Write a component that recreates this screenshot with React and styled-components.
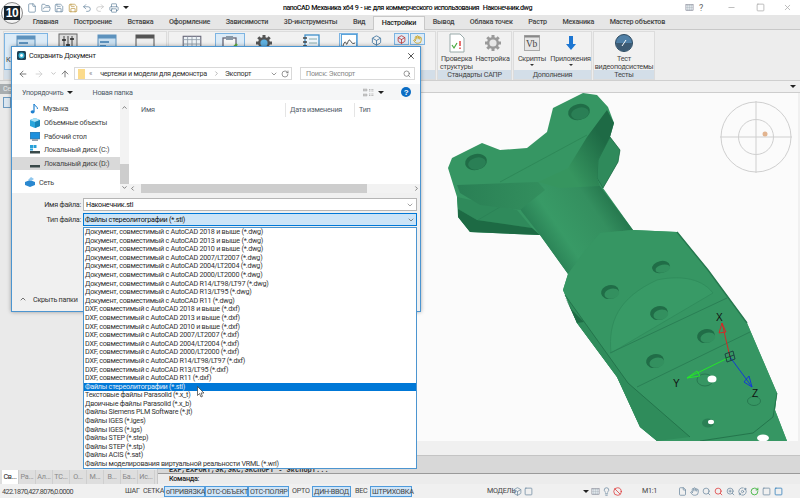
import styled, { createGlobalStyle } from 'styled-components';
import { File, FolderOpen, Save, Undo2, Redo2, Printer, ArrowLeft, ArrowRight, ArrowUp, ChevronDown, ChevronUp, ChevronLeft, ChevronRight, RotateCw, Search, X, Minus, Square, Box, Globe, Hand, ZoomIn, Lightbulb, Ban, Orbit } from 'lucide-react';

const Global = createGlobalStyle`
  html, body { margin: 0; padding: 0; background: #f0f0f0; }
  body { font-family: Roboto, "Noto Sans", sans-serif; font-size: 7.2px; letter-spacing: -0.25px; color: #333; }
  * { box-sizing: border-box; }
`;

const Page = styled.div`
  position: relative;
  width: 800px;
  height: 498px;
  overflow: hidden;
  display: flex;
  flex-direction: column;
  background: #f0f0f0;
`;

const Logo = styled.div`
  position: absolute;
  left: 1px;
  top: 2px;
  width: 22px;
  height: 22px;
  border-radius: 50%;
  background: #f4f4f4;
  border: 1px solid #8a8a8a;
  display: flex;
  align-items: center;
  justify-content: center;
  z-index: 3;
  span {
    background: #16222b;
    color: #fff;
    font: 700 12px "Liberation Sans", sans-serif;
    width: 16px;
    height: 14px;
    line-height: 14px;
    text-align: center;
    letter-spacing: -0.5px;
  }
`;

const TitleBar = styled.div`
  height: 15px;
  display: flex;
  align-items: center;
  background: #fff;
  position: relative;
  padding-left: 27px;
  color: #555;
`;

const QuickIcons = styled.div`
  display: flex;
  align-items: center;
  gap: 3.7px;
  svg { width: 10px; height: 10px; stroke-width: 1.6; color: #5b7b97; }
`;

const TitleText = styled.div`
  position: absolute;
  left: 283px;
  top: 3px;
  font-weight: 500;
  letter-spacing: -0.52px;
  word-spacing: 0.6px;
  color: #111;
  white-space: pre;
`;

const WinButtons = styled.div`
  margin-left: auto;
  display: flex;
  align-items: center;
  svg { width: 9px; height: 9px; }
`;

const WinSlot = styled.div`
  width: ${(p) => p.$w}px;
  margin-right: ${(p) => p.$mr || 0}px;
  display: flex;
  justify-content: center;
  color: ${(p) => p.$c || '#aaa'};
  font-size: 9px;
`;

const TabBar = styled.div`
  height: 15px;
  display: flex;
  align-items: flex-end;
  background: #e6e6e6;
  padding-left: 25px;
  border-bottom: 1px solid #c8c8c8;
`;

const Tab = styled.div`
  height: 13px;
  line-height: 12px;
  padding: 0 7.8px;
  font-weight: 500;
  color: ${(p) => (p.$active ? '#222' : '#444')};
  background: ${(p) => (p.$active ? '#f5f5f5' : 'transparent')};
  ${(p) => p.$active && 'border: 1px solid #c8c8c8; border-bottom: 0; margin-bottom: -1px; height: 14px;'}
`;

const Ribbon = styled.div`
  height: 51px;
  display: flex;
  gap: 1px;
  padding: 1px 0 0 3px;
  background: #ededed;
  border-bottom: 1px solid #cfcfcf;
`;

const Panel = styled.div`
  width: ${(p) => p.$w}px;
  display: flex;
  flex-direction: column;
  background: #f1f1f1;
  border: 1px solid #dcdcdc;
`;

const PanelBody = styled.div`
  flex: 1;
  display: flex;
  min-height: 0;
  justify-content: ${(p) => p.$justify || 'flex-start'};
  padding-top: 1px;
`;

const PanelLabel = styled.div`
  height: 9px;
  line-height: 9px;
  text-align: center;
  background: #d3dee8;
  color: #444;
`;

const RibbonBtn = styled.div`
  width: ${(p) => p.$w}px;
  display: flex;
  flex-direction: column;
  align-items: center;
  line-height: 7.5px;
  color: #444;
  text-align: center;
  white-space: nowrap;
  ${(p) => p.$on && 'background: #dcebf7; border: 1px solid #7db4e2;'}
  svg { flex: none; margin-bottom: 2px; }
`;

const StubLabel = styled.span`
  align-self: flex-start;
  padding-left: 1px;
`;

const SmallBtn = styled.div`
  width: 15px;
  height: 12px;
  margin-right: 1px;
  display: flex;
  align-items: center;
  justify-content: center;
  background: #dcebf7;
  border: 1px solid #7db4e2;
`;

const SmallSpot = styled.div`
  width: 36px;
  display: flex;
  justify-content: center;
  padding-top: 2px;
`;

const Caret = styled.div`
  width: 0;
  height: 0;
  margin-top: 1px;
  border: 2px solid transparent;
  border-top: 2px solid #333;
  border-bottom: 0;
`;

const Workspace = styled.div`
  flex: 1;
  min-height: 0;
  display: flex;
`;

const SidePanel = styled.div`
  width: 158px;
  display: flex;
  flex-direction: column;
  background: #e6e6e6;
  border-right: 1px solid #c8c8c8;
`;

const SideHead = styled.div`
  height: 10px;
  margin-top: 3px;
  padding-left: 3px;
  line-height: 10px;
  background: #a8adb0;
  color: #eee;
`;

const SideBody = styled.div`
  flex: 1;
  padding: 3px 3px;
  background: #eaeaea;
`;

const SideSquare = styled.div`
  width: 8px;
  height: 11px;
  background: #dbe6f0;
  border: 1px solid #6d9ac0;
`;

const SideTabs = styled.div`
  height: 14px;
  display: flex;
  padding-left: 2px;
  background: #dedede;
`;

const SideTab = styled.div`
  flex: 0 0 17px;
  text-align: center;
  line-height: 13px;
  color: ${(p) => (p.$active ? '#222' : '#888')};
  background: ${(p) => (p.$active ? '#fff' : 'transparent')};
  border-right: 1px solid #cfcfcf;
`;

const RightColumn = styled.div`
  flex: 1;
  min-width: 0;
  display: flex;
  flex-direction: column;
`;

const SubBar = styled.div`
  height: 12px;
  display: flex;
  align-items: center;
  justify-content: flex-end;
  padding-right: 4px;
  background: #f0f0f0;
  border-bottom: 1px solid #cdcdcd;
`;

const TinyCaret = styled.div`
  width: 0;
  height: 0;
  margin-left: ${(p) => p.$ml || 0}px;
  margin-right: ${(p) => p.$mr || 0}px;
  border: 3px solid transparent;
  border-top: 3px solid #222;
  border-bottom: 0;
`;

const Viewport = styled.div`
  height: 348px;
  margin-right: 2px;
  background: #fbfbfb;
  svg { display: block; }
`;

const Strip = styled.div`
  height: 15px;
  background: #f0f0f0;
  border-bottom: 1px solid #c4c4c4;
`;

const History = styled.div`
  height: 18px;
  padding: 10px 0 0 11px;
  overflow: hidden;
  background: #d8d8d8;
  border-bottom: 1px solid #9a9a9a;
  font: 700 7px/8px "Liberation Mono", monospace;
  letter-spacing: 0;
  color: #333;
  white-space: nowrap;
`;

const CommandLine = styled.div`
  flex: 1;
  padding-left: 11px;
  line-height: 10px;
  font-weight: 500;
  background: #ececec;
  color: #222;
`;

const StatusBar = styled.div`
  height: 14px;
  display: flex;
  align-items: center;
  padding: 0 2px;
  background: #f0f0f0;
  white-space: nowrap;
  color: #444;
`;

const Coords = styled.span`
  width: 74px;
  flex: none;
  letter-spacing: -0.6px;
`;

const StatusBtn = styled.div`
  flex: none;
  height: 11px;
  line-height: 9px;
  padding: 0 1px;
  margin-left: ${(p) => p.$ml || 0}px;
  ${(p) => p.$on && 'background: #cfe5f8; border: 1px solid #4f9bdc;'}
  width: ${(p) => (p.$w ? p.$w + 'px' : 'auto')};
  text-align: center;
`;

const StatusIcons = styled.div`
  display: flex;
  align-items: center;
  flex: none;
  margin-left: ${(p) => p.$ml}px;
  gap: ${(p) => p.$gap || 2}px;
  svg { width: 9px; height: 9px; color: #6e8aa0; }
`;

const Dialog = styled.div`
  position: absolute;
  left: 11px;
  top: 46px;
  width: 410px;
  height: 266px;
  z-index: 5;
  display: flex;
  flex-direction: column;
  background: #fff;
  border: 1px solid #4c95d0;
  box-shadow: 0 0 4px rgba(0, 0, 0, 0.35);
`;

const DialogTitle = styled.div`
  height: 17px;
  display: flex;
  align-items: center;
  padding: 0 4px 0 5px;
  gap: 3px;
  color: #222;
  > svg:last-child { margin-left: auto; }
`;

const NavRow = styled.div`
  height: 19px;
  display: flex;
  align-items: center;
  padding-left: 6px;
  color: #666;
  svg { flex: none; }
`;

const NavGap = styled.span`
  display: inline-flex;
  margin-left: ${(p) => p.$ml}px;
  color: ${(p) => p.$c || 'inherit'};
`;

const AddressBox = styled.div`
  width: 218px;
  height: 13px;
  margin-left: 4px;
  display: flex;
  align-items: center;
  border: 1px solid #d9d9d9;
  color: #333;
  white-space: nowrap;
`;

const AddressTail = styled.div`
  margin-left: auto;
  display: flex;
  align-items: center;
  gap: 3px;
  padding-right: 2px;
  color: #666;
`;

const FolderMark = styled.div`
  width: 7px;
  height: 10px;
  margin: 0 4px 0 3px;
  background: #fbdb8c;
`;

const SearchBox = styled.div`
  width: 115px;
  height: 13px;
  margin-left: 8px;
  display: flex;
  align-items: center;
  justify-content: space-between;
  padding: 0 3px 0 5px;
  border: 1px solid #d9d9d9;
  color: #888;
`;

const Toolbar = styled.div`
  height: 16px;
  margin-top: 1px;
  display: flex;
  align-items: center;
  padding: 0 9px 0 10px;
  background: #f5f6f7;
  color: #4d5a66;
`;

const ToolSpacer = styled.div`
  flex: 1;
`;

const Files = styled.div`
  flex: 1;
  min-height: 0;
  display: flex;
`;

const Tree = styled.div`
  width: 108px;
  padding-top: 2px;
  display: flex;
  flex-direction: column;
`;

const TreeRow = styled.div`
  height: 13.7px;
  flex: none;
  display: flex;
  align-items: center;
  gap: 4px;
  padding-left: ${(p) => p.$pad || 18}px;
  background: ${(p) => (p.$on ? '#d9d9d9' : 'transparent')};
  margin-bottom: ${(p) => p.$mb || 0}px;
  color: #444;
  svg { flex: none; }
`;

const TreeScroll = styled.div`
  width: 9px;
  position: relative;
  display: flex;
  flex-direction: column;
  justify-content: space-between;
  align-items: center;
  padding: 4px 0 2px;
  background: #f3f3f3;
`;

const ScrollThumb = styled.div`
  position: absolute;
  left: 0;
  top: 64px;
  width: 9px;
  height: 20px;
  background: #cdcdcd;
`;

const ListArea = styled.div`
  flex: 1;
  display: flex;
  flex-direction: column;
`;

const ListHead = styled.div`
  height: 14px;
  margin-top: 3px;
  display: flex;
  color: #55606b;
`;

const ColHead = styled.div`
  width: ${(p) => p.$w}px;
  padding-left: ${(p) => p.$pl}px;
  border-right: 1px solid #e5e5e5;
  line-height: 13px;
  &:last-child { border: 0; flex: 1; }
`;

const HScroll = styled.div`
  margin-top: auto;
  height: 9px;
  display: flex;
  align-items: center;
  justify-content: space-between;
  background: #f2f2f2;
  position: relative;
`;

const HThumb = styled.div`
  position: absolute;
  left: 12px;
  width: 226px;
  top: 0;
  height: 9px;
  background: #cdcdcd;
`;

const FormArea = styled.div`
  height: 118px;
  padding-top: 5px;
  background: #f0f0f0;
  display: flex;
  flex-direction: column;
  position: relative;
`;

const FieldRow = styled.div`
  display: flex;
  align-items: center;
  height: 13px;
  margin-bottom: 2px;
`;

const FieldLabel = styled.div`
  width: 71px;
  text-align: right;
  padding-right: 2px;
  color: #333;
`;

const FieldBox = styled.div`
  width: 334px;
  height: 13px;
  line-height: 11px;
  padding: 0 ${(p) => (p.$sel ? 1 : 2)}px;
  display: flex;
  align-items: center;
  justify-content: space-between;
  color: #111;
  background: ${(p) => (p.$sel ? '#cce4f7' : '#fff')};
  border: 1px solid ${(p) => (p.$sel ? '#0078d7' : '#b5b5b5')};
`;

const HideFolders = styled.div`
  margin-top: auto;
  margin-bottom: 4px;
  display: flex;
  align-items: center;
  gap: 6px;
  padding-left: 7px;
  height: 16px;
  color: #333;
`;

const DropList = styled.div`
  position: absolute;
  left: 83px;
  top: 227px;
  width: 334px;
  height: 242px;
  z-index: 6;
  background: #fff;
  border: 1px solid #4c95d0;
  color: #333;
`;

const DropRow = styled.div`
  height: 8.6px;
  line-height: 8.6px;
  padding-left: 1px;
  white-space: nowrap;
  color: ${(p) => (p.$on ? '#e4f0fb' : '#333')};
  background: ${(p) => (p.$on ? '#0078d7' : 'transparent')};
`;

const Cursor = styled.svg`
  position: absolute;
  left: 197px;
  top: 386px;
  z-index: 7;
`;

const dropItems = [
  'Документ, совместимый с AutoCAD 2018 и выше (*.dwg)',
  'Документ, совместимый с AutoCAD 2013 и выше (*.dwg)',
  'Документ, совместимый с AutoCAD 2010 и выше (*.dwg)',
  'Документ, совместимый с AutoCAD 2007/LT2007 (*.dwg)',
  'Документ, совместимый с AutoCAD 2004/LT2004 (*.dwg)',
  'Документ, совместимый с AutoCAD 2000/LT2000 (*.dwg)',
  'Документ, совместимый с AutoCAD R14/LT98/LT97 (*.dwg)',
  'Документ, совместимый с AutoCAD R13/LT95 (*.dwg)',
  'Документ, совместимый с AutoCAD R11 (*.dwg)',
  'DXF, совместимый с AutoCAD 2018 и выше (*.dxf)',
  'DXF, совместимый с AutoCAD 2013 и выше (*.dxf)',
  'DXF, совместимый с AutoCAD 2010 и выше (*.dxf)',
  'DXF, совместимый с AutoCAD 2007/LT2007 (*.dxf)',
  'DXF, совместимый с AutoCAD 2004/LT2004 (*.dxf)',
  'DXF, совместимый с AutoCAD 2000/LT2000 (*.dxf)',
  'DXF, совместимый с AutoCAD R14/LT98/LT97 (*.dxf)',
  'DXF, совместимый с AutoCAD R13/LT95 (*.dxf)',
  'DXF, совместимый с AutoCAD R11 (*.dxf)',
  'Файлы стереолитографии (*.stl)',
  'Текстовые файлы Parasolid (*.x_t)',
  'Двоичные файлы Parasolid (*.x_b)',
  'Файлы Siemens PLM Software (*.jt)',
  'Файлы IGES (*.iges)',
  'Файлы IGES (*.igs)',
  'Файлы STEP (*.step)',
  'Файлы STEP (*.stp)',
  'Файлы ACIS (*.sat)',
  'Файлы моделирования виртуальной реальности VRML (*.wrl)',
];

const tabs = ['Главная', 'Построение', 'Вставка', 'Оформление', 'Зависимости', '3D-инструменты', 'Вид', 'Настройки', 'Вывод', 'Облака точек', 'Растр', 'Механика', 'Мастер объектов'];
const sideTabs = ['Св...', 'Ра...', 'Ал...', 'ТС...', 'О...', 'М...', 'В...', 'Ба...', 'Ис...'];

function GridIcon({ size = 20 }) {
  return (
    <svg width={size} height={size} viewBox="0 0 20 20">
      <rect x="2" y="3" width="16" height="14" fill="#eef3f7" stroke="#667" />
      <path d="M2 6h16M2 10h16M2 14h16M6 3v14M10 3v14M14 3v14" stroke="#8a97a3" strokeWidth=".7" />
    </svg>
  );
}

function ViewsIcon() {
  return (
    <svg width="11" height="9" viewBox="0 0 11 9">
      <path d="M0 1h4v2H0zM0 6h4v2H0z" fill="#c9c9c9" stroke="#aaa" strokeWidth=".5" />
      <path d="M6 1.5h5M6 3h5M6 6h5M6 7.5h5" stroke="#999" strokeWidth=".7" strokeDasharray="1 .6" />
    </svg>
  );
}

function SlidersIcon() {
  return (
    <svg width="20" height="20" viewBox="0 0 20 20">
      <rect x="1" y="1" width="18" height="18" fill="#ddd" stroke="#666" />
      <path d="M6 3v14M10 3v14M14 3v14" stroke="#444" />
      <path d="M4 7h4M8 12h4M12 6h4" stroke="#222" strokeWidth="1.6" />
    </svg>
  );
}

function WindowIcon({ dark }) {
  return (
    <svg width="20" height="20" viewBox="0 0 20 20">
      <rect x="1" y="2" width="18" height="16" fill={dark ? '#eee' : '#c9dff0'} stroke={dark ? '#555' : '#5d92bd'} />
      <rect x="1" y="2" width="18" height="3.5" fill={dark ? '#555' : '#5d92bd'} />
      {dark ? <rect x="3" y="13" width="14" height="3" fill="#444" /> : <path d="M3 9h9M3 13h6" stroke="#5d92bd" strokeWidth="2" />}
    </svg>
  );
}

function ClipIcon() {
  return (
    <svg width="22" height="22" viewBox="0 0 22 22">
      <rect x="4" y="4" width="13" height="16" fill="#f7f7f7" stroke="#667" strokeWidth="1.3" />
      <rect x="7" y="2" width="7" height="4" fill="#8a98a6" />
      <path d="M10 18l8-8" stroke="#5fae3c" strokeWidth="2.4" />
    </svg>
  );
}

function GearIcon({ fill = '#555', core = '#5fb0e0', size = 20 }) {
  return (
    <svg width={size} height={size} viewBox="0 0 20 20">
      <path d="M10 2v16M2 10h16M4.3 4.3l11.4 11.4M15.7 4.3L4.3 15.7" stroke={fill} strokeWidth="3" />
      <circle cx="10" cy="10" r="6" fill={fill} />
      <circle cx="10" cy="10" r="3.6" fill={core} />
    </svg>
  );
}

function NotebookIcon() {
  return (
    <svg width="20" height="20" viewBox="0 0 20 20">
      <rect x="4" y="2" width="14" height="16" fill="#eef5fb" stroke="#3f8fc9" strokeWidth="1.3" />
      <path d="M2 5h4M2 9h4M2 13h4" stroke="#444" strokeWidth="1.4" />
      <path d="M8 6h8M8 10h8" stroke="#8aa" />
    </svg>
  );
}

function WaveIcon() {
  return (
    <svg width="16" height="16" viewBox="0 0 18 18">
      <rect x=".5" y=".5" width="17" height="17" fill="#fff" stroke="#4a9ad6" />
      <path d="M2 14c2-6 3-6 4-3s2-6 4-4 2 5 6 3" fill="none" stroke="#333" />
    </svg>
  );
}

function CheckDocIcon() {
  return (
    <svg width="16" height="20" viewBox="0 0 16 20">
      <path d="M1 1h10l4 4v14H1z" fill="#fff" stroke="#9aa" />
      <path d="M3 12l2 3 3-5" fill="none" stroke="#47a83c" strokeWidth="1.2" />
      <path d="M11 8v5M11 14.5v1.5" stroke="#d33" strokeWidth="1.4" />
    </svg>
  );
}

function VbIcon() {
  return (
    <svg width="16" height="20" viewBox="0 0 16 20">
      <rect x=".5" y="2.5" width="15" height="15" fill="#e6e6e6" stroke="#aaa" />
      <rect x=".5" y="2.5" width="15" height="2" fill="#888" />
      <text x="2" y="14" fontFamily="Liberation Serif, serif" fontSize="9.5" fill="#444">Vb</text>
    </svg>
  );
}

function DownArrowIcon() {
  return (
    <svg width="16" height="20" viewBox="0 0 16 20">
      <path d="M6 3h4v8h3l-5 6-5-6h3z" fill="#1d76d2" />
    </svg>
  );
}

function DialIcon() {
  return (
    <svg width="18" height="20" viewBox="0 0 18 20">
      <circle cx="9" cy="10" r="8.5" fill="#4f7fa6" stroke="#2e4a60" />
      <path d="M1 10a8 8 0 0 0 16 0z" fill="#3d5a72" />
      <path d="M7 13l4-6" stroke="#fff" strokeWidth="1" />
    </svg>
  );
}

function AppMark() {
  return (
    <svg width="9" height="9" viewBox="0 0 9 9">
      <rect width="9" height="9" rx="1.5" fill="#1f4256" />
      <circle cx="4.5" cy="4.5" r="3" fill="#39b6d8" />
      <circle cx="4.5" cy="4.5" r="1.4" fill="#fff" />
    </svg>
  );
}

function MusicMark() {
  return (
    <svg width="9" height="11" viewBox="0 0 9 11">
      <path d="M4 1v7.5" stroke="#1d80d0" strokeWidth="1.2" />
      <path d="M4 1c.5 2 3.5 2 3.5 5" stroke="#1d80d0" fill="none" />
      <ellipse cx="2.6" cy="8.8" rx="2" ry="1.6" fill="#1d80d0" />
    </svg>
  );
}

function CubeMark() {
  return (
    <svg width="10" height="10" viewBox="0 0 10 10">
      <path d="M5 0l5 2v6l-5 2-5-2V2z" fill="#2aa6dc" />
      <path d="M0 2l5 2 5-2-5-2z" fill="#a8e2f6" />
      <path d="M5 4v6l5-2V2z" fill="#1785b8" />
    </svg>
  );
}

function DeskMark() {
  return (
    <svg width="10" height="9" viewBox="0 0 10 9">
      <rect width="10" height="7" fill="#1e90dd" stroke="#567" strokeWidth=".5" />
      <rect x="2" y="7.5" width="6" height="1.2" fill="#678" />
    </svg>
  );
}

function DriveMark({ system }) {
  return (
    <svg width="10" height="9" viewBox="0 0 10 9">
      {system && <path d="M0 0h3v3H0zM3.5 0h3v3h-3zM0 3.5h3v2H0z" fill="#28a0d8" />}
      <rect y="6" width="10" height="2.5" fill="#3a4a4a" />
    </svg>
  );
}

function NetMark() {
  return (
    <svg width="10" height="10" viewBox="0 0 10 10">
      <path d="M0 5l5-2 5 2v3l-5 2-5-2z" fill="#2a88d0" />
      <path d="M3 3l3-3 3 2-3 2z" fill="#8fc7ee" />
    </svg>
  );
}

function Model() {
  const holes = [[661, 267, 9, 6], [610, 292, 9, 7], [659, 313, 9, 7], [706, 336, 9, 7], [655, 361, 9, 7]];
  return (
    <svg width="640" height="348" viewBox="158 93 640 348">
      <defs>
        <linearGradient id="shaft" gradientUnits="userSpaceOnUse" x1="530" y1="252" x2="618" y2="192">
          <stop offset="0" stopColor="#20704a" />
          <stop offset="0.35" stopColor="#389a66" />
          <stop offset="0.72" stopColor="#348f5f" />
          <stop offset="1" stopColor="#1f6d46" />
        </linearGradient>
        <linearGradient id="headSide" gradientUnits="userSpaceOnUse" x1="562" y1="160" x2="600" y2="135">
          <stop offset="0" stopColor="#36955f" />
          <stop offset="1" stopColor="#1e6a45" />
        </linearGradient>
        <linearGradient id="headFace" gradientUnits="userSpaceOnUse" x1="460" y1="190" x2="545" y2="190">
          <stop offset="0" stopColor="#2a8055" />
          <stop offset="1" stopColor="#338f5e" />
        </linearGradient>
      </defs>
      {/* whole silhouette */}
      <path d="M553 108L583 93L597 95L608 107L614 123L610 137L620 150L618 162L603 188L633 230L677 232L708 270L747 323L777 393L775 410L787 441L657 441L640 427L617 377L577 323L563 290L568 274L540 235L470 232L458 217L457 197L448 168L452 158L482 143L500 150L527 148L547 132Z" fill="#369663" />
      {/* back lug */}
      <path d="M610 137L620 150L618 162L603 188L597 178L598 160Z" fill="#2f8a5b" stroke="#1f6d46" strokeWidth=".7" />
      {/* lower lug */}
      <path d="M457 197L517 210L532 228L477 220L458 209Z" fill="#2f8a5b" />
      <path d="M458 209L477 220L532 228L540 235L470 232L458 217Z" fill="#1d6a44" />
      <path d="M478 220L500 207" stroke="#2a8055" strokeWidth=".7" />
      {/* shaft */}
      <path d="M505 186L600 186L633 230L600 233L568 274L540 235L522 212Z" fill="url(#shaft)" />
      {/* head faces */}
      <path d="M607 110L614 123L610 137L598 160L597 178L600 186L560 188L538 182L568 168L587 137Z" fill="url(#headSide)" />
      <path d="M457 185L538 182L545 190L520 210L480 205L460 193Z" fill="url(#headFace)" />
      <path d="M500 182L587 135" stroke="#2c8556" strokeWidth=".8" />
      <ellipse cx="579" cy="112" rx="11" ry="8" fill="#206d47" transform="rotate(-12 579 112)" />
      <ellipse cx="580" cy="113.5" rx="9" ry="6" fill="#2a7f55" transform="rotate(-12 580 113.5)" />
      <ellipse cx="476" cy="162" rx="11" ry="8" fill="#206d47" transform="rotate(-12 476 162)" />
      <ellipse cx="477" cy="163.5" rx="9" ry="6" fill="#2a7f55" transform="rotate(-12 477 163.5)" />
      {/* plate */}
      <path d="M568 274L583 253L600 233L633 230L677 232L708 270L747 323L777 393L775 410L787 441L657 441L640 427L617 377L577 323L563 290Z" fill="#369663" />
      <path d="M565 295L577 323L617 377L640 427L657 441L690 437L628 383Z" fill="#2f8c5b" />
      <path d="M565 297L572 310L584 322L577 323Z" fill="#1f6d46" />
      <path d="M565 295L628 383L690 437M700 441L753 433L773 417L777 393" fill="none" stroke="#1f6d46" strokeWidth=".8" />
      <path d="M677 232L708 270L747 323" fill="none" stroke="#25784e" strokeWidth="1.4" />
      <path d="M611 353C608 322 618 298 657 280C675 276 700 276 713 293Z" fill="#389a66" stroke="#2f8a5b" strokeWidth=".8" />
      <path d="M610 353L727 298M637 387L750 332" stroke="#2a8055" strokeWidth="1" />
      {holes.map(([cx, cy, rx, ry]) => (
        <g key={cx + '-' + cy} transform={`rotate(-12 ${cx} ${cy})`}>
          <ellipse cx={cx} cy={cy} rx={rx} ry={ry} fill="#206d47" />
          <ellipse cx={cx + 1.5} cy={cy + 2} rx={rx - 1.5} ry={ry - 2} fill="#33905f" />
        </g>
      ))}
      <ellipse cx="705" cy="380" rx="8" ry="6" fill="none" stroke="#277a50" />
      <ellipse cx="754" cy="401" rx="6.5" ry="4.5" fill="none" stroke="#277a50" />
      <ellipse cx="708" cy="423" rx="6" ry="4.5" fill="#2a8055" />
      <ellipse cx="712" cy="379" rx="4.5" ry="3.5" fill="#fff" />
      <ellipse cx="711" cy="422" rx="3" ry="2.2" fill="#fff" />
      <ellipse cx="763" cy="438" rx="6" ry="3.5" fill="#fff" />
      {/* axes */}
      <g fill="none" strokeWidth=".9">
        <path d="M730 357L722 323" stroke="#e02020" />
        <path d="M722 323L719 333L726 332Z" stroke="#e02020" />
        <path d="M730 357L687 378" stroke="#22ee22" />
        <path d="M687 378L697 371L700 376Z" stroke="#22ee22" />
        <path d="M730 357L752 387" stroke="#1030e0" />
        <path d="M752 387L744 382L749 376Z" stroke="#1030e0" />
        <path d="M725 354L733 351L735 359L727 362Z M729 352.5L731 360.5 M726 358L734 355" stroke="#123" strokeWidth=".7" />
      </g>
      <text x="716" y="321" fontSize="10" fill="#111" fontFamily="Liberation Sans, sans-serif">X</text>
      <text x="673" y="387" fontSize="10" fill="#111" fontFamily="Liberation Sans, sans-serif">Y</text>
      <text x="752" y="397" fontSize="10" fill="#111" fontFamily="Liberation Sans, sans-serif">Z</text>
      {/* compass */}
      <g fill="none" stroke="#cfcfcf">
        <circle cx="756" cy="137" r="35" />
        <circle cx="756" cy="137" r="17.5" />
        <path d="M720 137h72M756 101v72" />
      </g>
      <circle cx="765" cy="134" r="2.5" fill="#e2b48f" />
    </svg>
  );
}

function App() {
  return (
    <Page>
      <Global />
      <Logo><span>10</span></Logo>
      <TitleBar>
        <QuickIcons>
          <File />
          <FolderOpen />
          <Save />
          <Save color="#b38a28" />
          <Undo2 />
          <Redo2 color="#bbb" />
          <Printer />
          <TinyCaret />
        </QuickIcons>
        <TitleText>nanoCAD Механика x64 9 - не для коммерческого использования  Наконечник.dwg</TitleText>
        <WinButtons>
          <WinSlot $w={12}><GridIcon size={10} /></WinSlot>
          <WinSlot $w={12} $mr={9} $c="#666">?</WinSlot>
          <WinSlot $w={30}><Minus /></WinSlot>
          <WinSlot $w={28}><Square /></WinSlot>
          <WinSlot $w={26}><X /></WinSlot>
        </WinButtons>
      </TitleBar>
      <TabBar>
        {tabs.map((t) => <Tab key={t} $active={t === 'Настройки'}>{t}</Tab>)}
      </TabBar>
      <Ribbon>
        <Panel $w={164}>
          <PanelBody>
            <RibbonBtn $w={44} $on><WindowIcon /><StubLabel>К</StubLabel></RibbonBtn>
            <RibbonBtn $w={40}><SlidersIcon /></RibbonBtn>
            <RibbonBtn $w={38}><WindowIcon /></RibbonBtn>
            <RibbonBtn $w={38}><WindowIcon dark /></RibbonBtn>
          </PanelBody>
          <PanelLabel />
        </Panel>
        <Panel $w={268}>
          <PanelBody>
            <RibbonBtn $w={46}><GridIcon size={22} /></RibbonBtn>
            <RibbonBtn $w={30} $on><ClipIcon /></RibbonBtn>
            <RibbonBtn $w={38}><GearIcon /></RibbonBtn>
            <RibbonBtn $w={56}><NotebookIcon /></RibbonBtn>
            <RibbonBtn $w={19} $on><WaveIcon /></RibbonBtn>
            <SmallSpot><Box size={11} color="#4f7fa6" /></SmallSpot>
            <SmallBtn><Box size={9} color="#b22" /></SmallBtn>
            <SmallBtn><Hand size={9} color="#c90" /></SmallBtn>
          </PanelBody>
          <PanelLabel />
        </Panel>
        <Panel $w={75}>
          <PanelBody>
            <RibbonBtn $w={37}><CheckDocIcon /><span>Проверка<br />структуры</span></RibbonBtn>
            <RibbonBtn $w={35}><GearIcon fill="#9a9a9a" core="#e8e8e8" /><span>Настройка</span></RibbonBtn>
          </PanelBody>
          <PanelLabel>Стандарты САПР</PanelLabel>
        </Panel>
        <Panel $w={79}>
          <PanelBody>
            <RibbonBtn $w={36}><VbIcon /><span>Скрипты</span><Caret /></RibbonBtn>
            <RibbonBtn $w={41}><DownArrowIcon /><span>Приложения</span><Caret /></RibbonBtn>
          </PanelBody>
          <PanelLabel>Дополнения</PanelLabel>
        </Panel>
        <Panel $w={62}>
          <PanelBody $justify="center">
            <RibbonBtn $w={60}><DialIcon /><span>Тест<br />видеоподсистемы</span></RibbonBtn>
          </PanelBody>
          <PanelLabel>Тесты</PanelLabel>
        </Panel>
      </Ribbon>
      <Workspace>
        <SidePanel>
          <SideHead>Се</SideHead>
          <SideBody><SideSquare /></SideBody>
          <SideTabs>
            {sideTabs.map((t, i) => <SideTab key={t} $active={i === 0}>{t}</SideTab>)}
          </SideTabs>
        </SidePanel>
        <RightColumn>
          <SubBar><TinyCaret /></SubBar>
          <Viewport><Model /></Viewport>
          <Strip />
          <History>EXP,EXPORT,ЭК,ЭКС,ЭКСПОРТ - Экспорт...</History>
          <CommandLine>Команда:</CommandLine>
        </RightColumn>
      </Workspace>
      <StatusBar>
        <Coords>422.1870,427.8076,0.0000</Coords>
        <StatusBtn $ml={48} $w={13}>ШАГ</StatusBtn>
        <StatusBtn $ml={5} $w={19}>СЕТКА</StatusBtn>
        <StatusBtn $ml={3} $on $w={41}>оПРИВЯЗКА</StatusBtn>
        <StatusBtn $on $w={43}>ОТС-ОБЪЕКТ</StatusBtn>
        <StatusBtn $on $w={41}>ОТС-ПОЛЯР</StatusBtn>
        <StatusBtn $ml={2} $w={18}>ОРТО</StatusBtn>
        <StatusBtn $ml={3} $on $w={39}>ДИН-ВВОД</StatusBtn>
        <StatusBtn $ml={3} $w={14}>ВЕС</StatusBtn>
        <StatusBtn $ml={2} $on $w={42}>ШТРИХОВКА</StatusBtn>
        <StatusBtn $ml={74} $w={26}>МОДЕЛЬ</StatusBtn>
        <StatusIcons $ml={1}><Box /><Square /></StatusIcons>
        <StatusIcons $ml={50}><TinyCaret /><GridIcon size={9} /><Lightbulb /><Ban color="#d33" /></StatusIcons>
        <StatusBtn $ml={19} $w={16}>M1:1</StatusBtn>
        <StatusIcons $ml={21} $gap={3}><File /><Hand /><Search /><Search color="#d33" /><ZoomIn /><Orbit /><RotateCw color="#2a2" /><Square /><Square color="#2a7ab8" /></StatusIcons>
      </StatusBar>

      <Dialog>
        <DialogTitle>
          <AppMark />
          <span>Сохранить Документ</span>
          <X size={10} color="#333" />
        </DialogTitle>
        <NavRow>
          <ArrowLeft size={10} />
          <NavGap $ml={6} $c="#ccc"><ArrowRight size={10} /></NavGap>
          <NavGap $ml={6} $c="#999"><ChevronDown size={7} /></NavGap>
          <NavGap $ml={3}><ArrowUp size={10} /></NavGap>
          <AddressBox>
            <FolderMark />
            <NavGap $ml={0} $c="#888">«</NavGap>
            <NavGap $ml={8}>чертежи и модели для демонстра</NavGap>
            <NavGap $ml={6} $c="#888"><ChevronRight size={7} /></NavGap>
            <NavGap $ml={5}>Экспорт</NavGap>
            <AddressTail><ChevronDown size={8} /><RotateCw size={8} /></AddressTail>
          </AddressBox>
          <SearchBox>
            <span>Поиск: Экспорт</span>
            <Search size={8} color="#666" />
          </SearchBox>
        </NavRow>
        <Toolbar>
          <span>Упорядочить</span>
          <TinyCaret $ml={3} />
          <NavGap $ml={20}>Новая папка</NavGap>
          <ToolSpacer />
          <ViewsIcon />
          <TinyCaret $ml={4} $mr={17} />
          <svg width="10" height="10" viewBox="0 0 10 10">
            <circle cx="5" cy="5" r="5" fill="#0a6cc4" />
            <text x="5" y="8" textAnchor="middle" fontSize="8" fontWeight="700" fill="#fff" fontFamily="Liberation Sans, sans-serif">?</text>
          </svg>
        </Toolbar>
        <Files>
          <Tree>
            <TreeRow><MusicMark /><span>Музыка</span></TreeRow>
            <TreeRow><CubeMark /><span>Объемные объекты</span></TreeRow>
            <TreeRow><DeskMark /><span>Рабочий стол</span></TreeRow>
            <TreeRow><DriveMark system /><span>Локальный диск (C:)</span></TreeRow>
            <TreeRow $on $mb={5}><DriveMark /><span>Локальный диск (D:)</span></TreeRow>
            <TreeRow $pad={13}><NetMark /><span>Сеть</span></TreeRow>
          </Tree>
          <TreeScroll>
            <ChevronUp size={7} color="#333" />
            <ScrollThumb />
            <ChevronDown size={7} color="#333" />
          </TreeScroll>
          <ListArea>
            <ListHead>
              <ColHead $w={157} $pl={12}>Имя</ColHead>
              <ColHead $w={69} $pl={4}>Дата изменения</ColHead>
              <ColHead $pl={4}>Тип</ColHead>
            </ListHead>
            <HScroll>
              <HThumb />
              <ChevronLeft size={7} color="#333" />
              <ChevronRight size={7} color="#333" />
            </HScroll>
          </ListArea>
        </Files>
        <FormArea>
          <FieldRow>
            <FieldLabel>Имя файла:</FieldLabel>
            <FieldBox>Наконечник.stl<ChevronDown size={8} color="#777" /></FieldBox>
          </FieldRow>
          <FieldRow>
            <FieldLabel>Тип файла:</FieldLabel>
            <FieldBox $sel>Файлы стереолитографии (*.stl)<ChevronDown size={8} color="#555" /></FieldBox>
          </FieldRow>
          <HideFolders><ChevronUp size={8} /><span>Скрыть папки</span></HideFolders>
        </FormArea>
      </Dialog>
      <DropList>
        {dropItems.map((t, i) => <DropRow key={t} $on={i === 18}>{t}</DropRow>)}
      </DropList>
      <Cursor width="8" height="12" viewBox="0 0 8 12">
        <path d="M.5.5v9l2-2 1.5 3.5 1.5-.7L4 7h3z" fill="#fff" stroke="#333" strokeWidth=".7" />
      </Cursor>
    </Page>
  );
}

export default App;
